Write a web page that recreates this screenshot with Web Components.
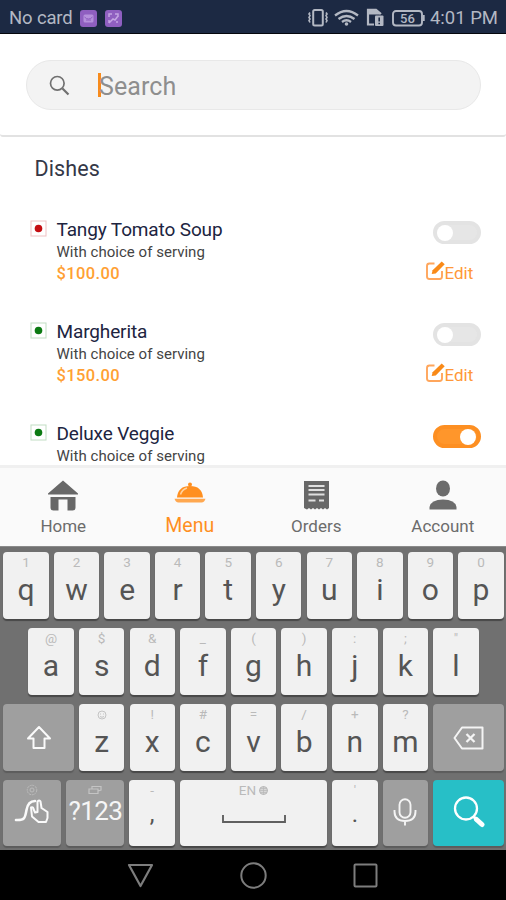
<!DOCTYPE html>
<html lang="en">
<head>
<meta charset="utf-8">
<meta name="viewport" content="width=device-width, initial-scale=1">
<title>Menu</title>
<style>
	body {
		font-family: Roboto, sans-serif;
		margin: 0;
	}
</style>
</head>
<body>
<menu-app></menu-app>

<script>
class StatusBar extends HTMLElement {
	constructor() {
		super();
		this.attachShadow({ mode: 'open' });
		this.shadowRoot.innerHTML = `
			<style>
				:host {
					align-items: center;
					background: #1c2943;
					border-bottom: 1px solid #05070d;
					box-sizing: border-box;
					color: #b3b8c3;
					display: flex;
					flex: none;
					font-size: 18.5px;
					height: 34px;
					justify-content: space-between;
					padding: 3px 8px 0 9px;
				}
				div {
					align-items: center;
					display: flex;
				}
				svg {
					display: block;
				}
				.card {
					letter-spacing: -0.15px;
					margin-right: 7px;
				}
				.app {
					margin-right: 8px;
				}
				.time {
					margin-left: 5px;
				}
			</style>
			<div>
				<span class='card'>No card</span>
				<svg class='app' width='17' height='17' viewBox='0 0 17 17'>
					<rect width='17' height='17' rx='3' fill='#8f5fc0'/>
					<rect x='3.5' y='4.5' width='10' height='8' rx='1.5' fill='#b591dc'/>
					<path d='M4.5 7q4 4 8 0M6 10h5' fill='none' stroke='#8f5fc0'/>
				</svg>
				<svg width='17' height='17' viewBox='0 0 17 17'>
					<rect width='17' height='17' rx='3' fill='#8f5fc0'/>
					<path d='M4 7V4h3M10 4h3v3M4 13l4-4 2 1 3-4M4 10v3M12 11v2' fill='none' stroke='#c3a5e2' stroke-width='1.5'/>
				</svg>
			</div>
			<div>
				<svg width='117' height='20' viewBox='0 0 117 20' fill='none' stroke='#b3b8c3'>
					<rect x='5.2' y='2' width='9.6' height='15.5' rx='1.5' stroke-width='2'/>
					<path d='M2 4.5l-1 1.5 1 1.5-1 2 1 1.5-1 1.5 1 2M18 4.5l1 1.5-1 1.5 1 2-1 1.5 1 1.5-1 2' stroke-width='1.6'/>
					<path d='M27 7.5q11.5-9 23 0M30.5 11q8-6 16 0M34 14q4.5-3.5 9 0' stroke-width='2.3'/>
					<circle cx='38.5' cy='16' r='1.8' fill='#b3b8c3' stroke='none'/>
					<path d='M60 5v11.5h6M60 5V1.8h8l5 4.2' stroke-width='2.2'/>
					<path d='M60 2h8l4 4h-12z' fill='#b3b8c3'/>
					<rect x='67' y='7.5' width='8.5' height='10.5' rx='1' fill='#b3b8c3' stroke='none'/>
					<path d='M71.2 9.5v4M71.2 14.7v1.6' stroke='#1c2943' stroke-width='1.6'/>
					<rect x='85' y='3' width='29' height='14.5' rx='3' stroke-width='1.9'/>
					<path d='M115.7 7v6' stroke-width='2'/>
					<text x='99.5' y='15' text-anchor='middle' font-size='13' font-weight='500' fill='#b3b8c3' stroke='none'>56</text>
				</svg>
				<span class='time'>4:01 PM</span>
			</div>
		`;
	}
}

class SearchField extends HTMLElement {
	constructor() {
		super();
		this.attachShadow({ mode: 'open' });
		this.shadowRoot.innerHTML = `
			<style>
				:host {
					align-items: center;
					background: #f3f3f3;
					border: 1.5px solid #e8e8e8;
					border-radius: 25px;
					box-sizing: border-box;
					display: flex;
					height: 50px;
					padding-left: 22px;
				}
				svg {
					display: block;
				}
				.caret {
					background: #f78b1c;
					height: 24px;
					margin: 0 -2px 0 28px;
					width: 3px;
				}
				.hint {
					color: #8e8e8e;
					font-size: 25px;
					letter-spacing: 0.1px;
					line-height: 46px;
					padding-top: 3px;
				}
			</style>
			<svg width='21' height='21' viewBox='0 0 21 21' fill='none' stroke='#707070'>
				<circle cx='8.3' cy='8.3' r='6.8' stroke-width='1.7'/>
				<path d='M13.5 13.5l6 6' stroke-width='2.2'/>
			</svg>
			<div class='caret'></div>
			<span class='hint'><slot></slot></span>
		`;
	}
}

class ToggleSwitch extends HTMLElement {
	constructor() {
		super();
		this.attachShadow({ mode: 'open' });
		this.shadowRoot.innerHTML = `
			<style>
				:host {
					background: #e6e6e6;
					border: 4px solid #e3e3e3;
					border-radius: 12px;
					box-sizing: border-box;
					display: flex;
					height: 23px;
					width: 48px;
				}
				:host([on]) {
					background: #ff962b;
					border-color: #fd8f22;
					justify-content: flex-end;
				}
				div {
					background: #fff;
					border-radius: 50%;
					height: 16px;
					margin: -0.5px 0.5px;
					width: 16px;
				}
			</style>
			<div></div>
		`;
	}
}

class DishItem extends HTMLElement {
	constructor() {
		super();
		this.attachShadow({ mode: 'open' });
	}

	connectedCallback() {
		const color = this.hasAttribute('veg') ? '#0b7a12' : '#c40d12';
		const price = this.getAttribute('price');
		this.shadowRoot.innerHTML = `
			<style>
				:host {
					display: flex;
					flex: none;
					height: 102px;
					padding: 0 25.5px 0 30px;
				}
				svg {
					display: block;
				}
				.marker {
					margin: 3px 9.5px 0 0;
				}
				.info {
					flex: 1;
					padding-top: 1px;
				}
				.name {
					color: #20243f;
					font-size: 19px;
					letter-spacing: -0.13px;
					line-height: 24px;
				}
				.desc {
					color: #444;
					font-size: 15px;
					letter-spacing: 0.03px;
					line-height: 21px;
				}
				.price {
					color: #ffa033;
					font-size: 16.5px;
					font-weight: 500;
					letter-spacing: 0.4px;
					line-height: 22px;
				}
				.actions {
					padding-top: 4px;
					width: 55px;
				}
				toggle-switch {
					margin-left: 7px;
				}
				.edit {
					color: #ff9838;
					display: flex;
					font-size: 17px;
					line-height: 20px;
					margin: 17px 0 0 -1px;
				}
				.edit span {
					margin-top: 2px;
				}
			</style>
			<svg class='marker' width='17' height='17' viewBox='0 0 17 17'>
				<rect x='1' y='1' width='15' height='15' fill='none' stroke='${color}' stroke-opacity='.25'/>
				<circle cx='8.5' cy='8.5' r='3.8' fill='${color}'/>
			</svg>
			<div class='info'>
				<div class='name'>${this.getAttribute('name')}</div>
				<div class='desc'>With choice of serving</div>
				${price ? `<div class='price'>${price}</div>` : ''}
			</div>
			<div class='actions'>
				<toggle-switch ${this.hasAttribute('on') ? 'on' : ''}></toggle-switch>
				${price ? `
					<div class='edit'>
						<svg width='20' height='20' viewBox='0 0 20 20'>
							<path d='M9.5 2.5H4.5Q2 2.5 2 5v10.5Q2 18 4.5 18h10Q17 18 17 15.5V10' fill='none' stroke='#ffa65c' stroke-width='1.9'/>
							<path d='M16.7.5l3 2.7-9 9.2-4 .6.9-3.8z' fill='#f98a18'/>
						</svg>
						<span>Edit</span>
					</div>
				` : ''}
			</div>
		`;
	}
}

class TabItem extends HTMLElement {
	constructor() {
		super();
		this.attachShadow({ mode: 'open' });
		this.shadowRoot.innerHTML = `
			<style>
				:host {
					align-items: center;
					color: #6c6c6c;
					display: flex;
					flex: 1;
					flex-direction: column;
					font-size: 17px;
					padding-top: 10px;
				}
				:host([active]) {
					color: #ff8f1f;
					font-size: 19.5px;
				}
				::slotted(svg) {
					display: block;
				}
				span {
					line-height: 24px;
					margin-top: 1.5px;
				}
			</style>
			<slot name='icon'></slot>
			<span><slot></slot></span>
		`;
	}
}

const KEY_ICONS = {
	shift: `<svg width='26' height='26' viewBox='0 0 26 26'><path d='M13 2L2 13.5h5.5V23h11v-9.5H24z' fill='none' stroke='#fafafa' stroke-width='2' stroke-linejoin='round'/></svg>`,
	back: `<svg width='32' height='24' viewBox='0 0 32 24' fill='none' stroke='#f4f4f4' stroke-width='2' stroke-linejoin='round'><path d='M1.5 12l7.5-10.5h20.5v21H9z'/><path d='M13.5 8l8 8M21.5 8l-8 8' stroke-width='2.3'/></svg>`,
	swipe: `<svg width='36' height='26' viewBox='0 0 36 26' fill='none' stroke='#fafafa' stroke-width='2.6' stroke-linejoin='round' stroke-linecap='round'><path d='M2 22c9 .5 9-2 10.5-10C13.5 6 16 3 21 3'/><path d='M24.5 24l-6.5-5.5-1-9q2-1 2.5 1.5l1.5 3.5 2.5-.5V3.5q2-2 3 0l1 6.5 6 4v6L32 24z' stroke-width='2'/></svg>`,
	space: `<svg width='64' height='10' viewBox='0 0 64 10'><path d='M1 1v7h62V1' fill='none' stroke='#606060' stroke-width='1.9'/></svg>`,
	mic: `<svg width='24' height='28' viewBox='0 0 24 28' fill='none' stroke='#f4f4f4' stroke-width='1.9'><rect x='6.5' y='1.2' width='11' height='18.5' rx='5.5'/><path d='M1.5 12v1.5q0 9.5 10.5 9.5t10.5-9.5V12M12 23v4.5'/></svg>`,
	search: `<svg width='32' height='32' viewBox='0 0 32 32' fill='none' stroke='#fff'><circle cx='13' cy='12.5' r='11' stroke-width='2.3'/><path d='M20.5 20.5l3 3' stroke-width='3'/><path d='M23.5 23.5l5.5 5' stroke-width='5' stroke-linecap='round'/></svg>`,
	smile: `<svg width='10' height='10' viewBox='0 0 10 10' fill='none' stroke='#c4c4c4'><circle cx='5' cy='5' r='4'/><path d='M3 4h1M6 4h1M3 6.5q2 1.5 4 0'/></svg>`,
	gear: `<svg width='12' height='12' viewBox='0 0 12 12' fill='none' stroke='#bcbcbc'><circle cx='6' cy='6' r='4.8' stroke-dasharray='2 .8'/><circle cx='6' cy='6' r='2'/></svg>`,
	pad: `<svg width='14' height='10' viewBox='0 0 14 10' fill='none' stroke='#c4c4c4' stroke-width='1.2'><path d='M1 4h9v4.5H1zM4 4V1.5h9V5l-3 1'/></svg>`,
	globe: `<svg width='9' height='9' viewBox='0 0 9 9' fill='none' stroke='#b8b8b8'><circle cx='4.5' cy='4.5' r='4' fill='#d8d8d8'/><path d='M0 4.5h9M4.5 0v9M1 2.5h7M1 6.5h7' stroke-width='.7'/></svg>`
};

class KeyboardKey extends HTMLElement {
	constructor() {
		super();
		this.attachShadow({ mode: 'open' });
	}

	connectedCallback() {
		const icon = KEY_ICONS[this.getAttribute('icon')];
		const hintIcon = KEY_ICONS[this.getAttribute('hint-icon')] || '';
		const hint = this.getAttribute('hint') || '';
		this.shadowRoot.innerHTML = `
			<style>
				:host {
					background: #f1f1f1;
					border-radius: 4px;
					box-shadow: 0 2px 1px #484848;
					box-sizing: border-box;
					color: #555;
					display: flex;
					flex: 0 0 45.5px;
					flex-direction: column;
					font-size: 30px;
					height: 67px;
					min-width: 0;
				}
				:host([dark]) {
					background: #9f9f9f;
					box-shadow: 0 1.5px 1px #5c5c5c;
					color: #f6f6f6;
				}
				:host([teal]) {
					background: #27bfc7;
				}
				:host([size='wide']) {
					flex-basis: 70.5px;
				}
				:host([size='mid']) {
					flex-basis: 58px;
				}
				:host([size='space']) {
					flex: 1;
				}
				.hint {
					align-items: center;
					color: #bababa;
					display: flex;
					font-size: 13.5px;
					gap: 3px;
					height: 21px;
					justify-content: center;
					line-height: 21px;
				}
				.main {
					align-items: center;
					display: flex;
					height: var(--main-height, 33px);
					justify-content: center;
					line-height: var(--main-height, 33px);
					white-space: nowrap;
				}
				:host([icon='space']) .main {
					padding-top: 7px;
				}
				:host([size='mid']) .main {
					font-size: 26px;
					letter-spacing: -0.6px;
				}
				:host([size='mid']) .hint {
					height: 20px;
				}
				:host([punct]) .main {
					font-size: 24px;
					height: 26px;
					line-height: 26px;
				}
				:host([icon='shift']) .main,
				:host([icon='back']) .main {
					height: 26px;
				}
				svg {
					display: block;
					flex: none;
				}
			</style>
			<div class='hint'>${hint}${hintIcon}</div>
			<div class='main'>${icon || '<slot></slot>'}</div>
		`;
	}
}

class SoftKeyboard extends HTMLElement {
	constructor() {
		super();
		this.attachShadow({ mode: 'open' });
		const keys = (letters, hints) => [...letters].map((letter, i) => {
			const hint = hints[i] === '☺' ? `hint-icon='smile'` : `hint='${hints[i].replace('&', '&amp;')}'`;
			return `<keyboard-key ${hint}>${letter}</keyboard-key>`;
		}).join('');
		this.shadowRoot.innerHTML = `
			<style>
				:host {
					background: #707070;
					border-top: 1px solid #8a8a8a;
					box-sizing: border-box;
					display: flex;
					flex: none;
					flex-direction: column;
					gap: 9px;
					height: 304px;
					padding: 5px 2.25px 0 3.25px;
				}
				.row {
					display: flex;
					justify-content: space-between;
				}
				.row.middle {
					padding: 0 25px;
				}
				.row.bottom {
					--main-height: 22px;
					gap: 5.1px;
				}
				.bottom keyboard-key {
					height: 65.5px;
				}
			</style>
			<div class='row'>${keys('qwertyuiop', '1234567890')}</div>
			<div class='row middle'>${keys('asdfghjkl', '@$&_():;"')}</div>
			<div class='row'>
				<keyboard-key dark size='wide' icon='shift'></keyboard-key>
				${keys('zxcvbnm', '☺!#=/+?')}
				<keyboard-key dark size='wide' icon='back'></keyboard-key>
			</div>
			<div class='row bottom'>
				<keyboard-key dark size='mid' icon='swipe' hint-icon='gear'></keyboard-key>
				<keyboard-key dark size='mid' hint-icon='pad'>?123</keyboard-key>
				<keyboard-key punct hint='-'>,</keyboard-key>
				<keyboard-key size='space' icon='space' hint='EN' hint-icon='globe'></keyboard-key>
				<keyboard-key punct hint='&#39;'>.</keyboard-key>
				<keyboard-key dark icon='mic'></keyboard-key>
				<keyboard-key dark teal size='wide' icon='search'></keyboard-key>
			</div>
		`;
	}
}

class SystemNav extends HTMLElement {
	constructor() {
		super();
		this.attachShadow({ mode: 'open' });
		this.shadowRoot.innerHTML = `
			<style>
				:host {
					align-items: center;
					background: #000;
					display: flex;
					flex: none;
					gap: 85.5px;
					height: 50px;
					justify-content: center;
				}
				svg {
					display: block;
				}
			</style>
			<svg width='27' height='27' viewBox='0 0 27 27' fill='none' stroke='#7d7d7d' stroke-width='2.2' stroke-linejoin='round'><path d='M2 3h23L13.5 24z'/></svg>
			<svg width='27' height='27' viewBox='0 0 27 27' fill='none' stroke='#7d7d7d' stroke-width='2'><circle cx='13.5' cy='13.5' r='12.2'/></svg>
			<svg width='27' height='27' viewBox='0 0 27 27' fill='none' stroke='#7d7d7d' stroke-width='2'><rect x='2.5' y='2.5' width='22' height='22' rx='1'/></svg>
		`;
	}
}

class MenuApp extends HTMLElement {
	constructor() {
		super();
		this.attachShadow({ mode: 'open' });
		this.shadowRoot.innerHTML = `
			<style>
				:host {
					background: #fff;
					display: flex;
					flex-direction: column;
					height: 900px;
					overflow: hidden;
					width: 506px;
				}
				header {
					border-bottom: 2px solid #e2e2e2;
					border-radius: 0 0 3px 3px;
					box-sizing: border-box;
					flex: none;
					height: 103px;
					padding: 26px 25px 0 26px;
				}
				main {
					display: flex;
					flex: 1;
					flex-direction: column;
					min-height: 0;
					overflow: hidden;
				}
				h1 {
					color: #343847;
					flex: none;
					font-size: 21.5px;
					font-weight: 400;
					letter-spacing: 0.1px;
					line-height: 30px;
					margin: 17px 0 33px 34.5px;
				}
				nav {
					background: #fafafa;
					border-top: 3px solid #f0f0f0;
					box-sizing: border-box;
					display: flex;
					flex: none;
					height: 81px;
				}
			</style>
			<status-bar></status-bar>
			<header><search-field>Search</search-field></header>
			<main>
				<h1>Dishes</h1>
				<dish-item name='Tangy Tomato Soup' price='$100.00'></dish-item>
				<dish-item veg name='Margherita' price='$150.00'></dish-item>
				<dish-item veg on name='Deluxe Veggie'></dish-item>
			</main>
			<nav>
				<tab-item>
					<svg slot='icon' width='32' height='34' viewBox='0 0 32 34' fill='#686868'><path d='M16 2.500L1 15.500v1h30v-1zM3.500 19h25v10.500q0 3-3 3h-5V21.500h-9v11h-5q-3 0-3-3z'/></svg>
					Home
				</tab-item>
				<tab-item active>
					<svg slot='icon' width='32' height='34' viewBox='0 0 32 34'><circle cx='16' cy='6.5' r='2' fill='#ff8f1f'/><path d='M3 19.5Q4 8 16 8T29 19.5z' fill='#ff8f1f'/><path d='M6.5 16.5q1.5-5 6.5-6.5' fill='none' stroke='#ffd2a0' stroke-width='1.5'/><path d='M.5 20.8h31q-1 3.7-4 3.7h-23q-3 0-4-3.7z' fill='#ffa850'/></svg>
					Menu
				</tab-item>
				<tab-item>
					<svg slot='icon' width='32' height='34' viewBox='0 0 32 34'><path d='M4 3h25v27l-2 1.5-2-1.5-2 1.5-2-1.5-2 1.5-2-1.5-2 1.5-2-1.5-2 1.5-2-1.5-2 1.5-3-1.5z' fill='#686868'/><path d='M8.500 8h16M8.500 12h16M8.500 16.500h16M8.500 22.500h7M19 22.500h5' stroke='#e0e0e0' stroke-width='1.9'/></svg>
					Orders
				</tab-item>
				<tab-item>
					<svg slot='icon' width='32' height='34' viewBox='0 0 32 34' fill='#6c6c6c'><ellipse cx='16' cy='10.5' rx='7' ry='8'/><path d='M2.5 31.5v-2.5Q4 21.5 16 21.5T29.5 29v2.5z'/></svg>
					Account
				</tab-item>
			</nav>
			<soft-keyboard></soft-keyboard>
			<system-nav></system-nav>
		`;
	}
}

customElements.define('status-bar', StatusBar);
customElements.define('search-field', SearchField);
customElements.define('toggle-switch', ToggleSwitch);
customElements.define('dish-item', DishItem);
customElements.define('tab-item', TabItem);
customElements.define('keyboard-key', KeyboardKey);
customElements.define('soft-keyboard', SoftKeyboard);
customElements.define('system-nav', SystemNav);
customElements.define('menu-app', MenuApp);
</script>
</body>
</html>
